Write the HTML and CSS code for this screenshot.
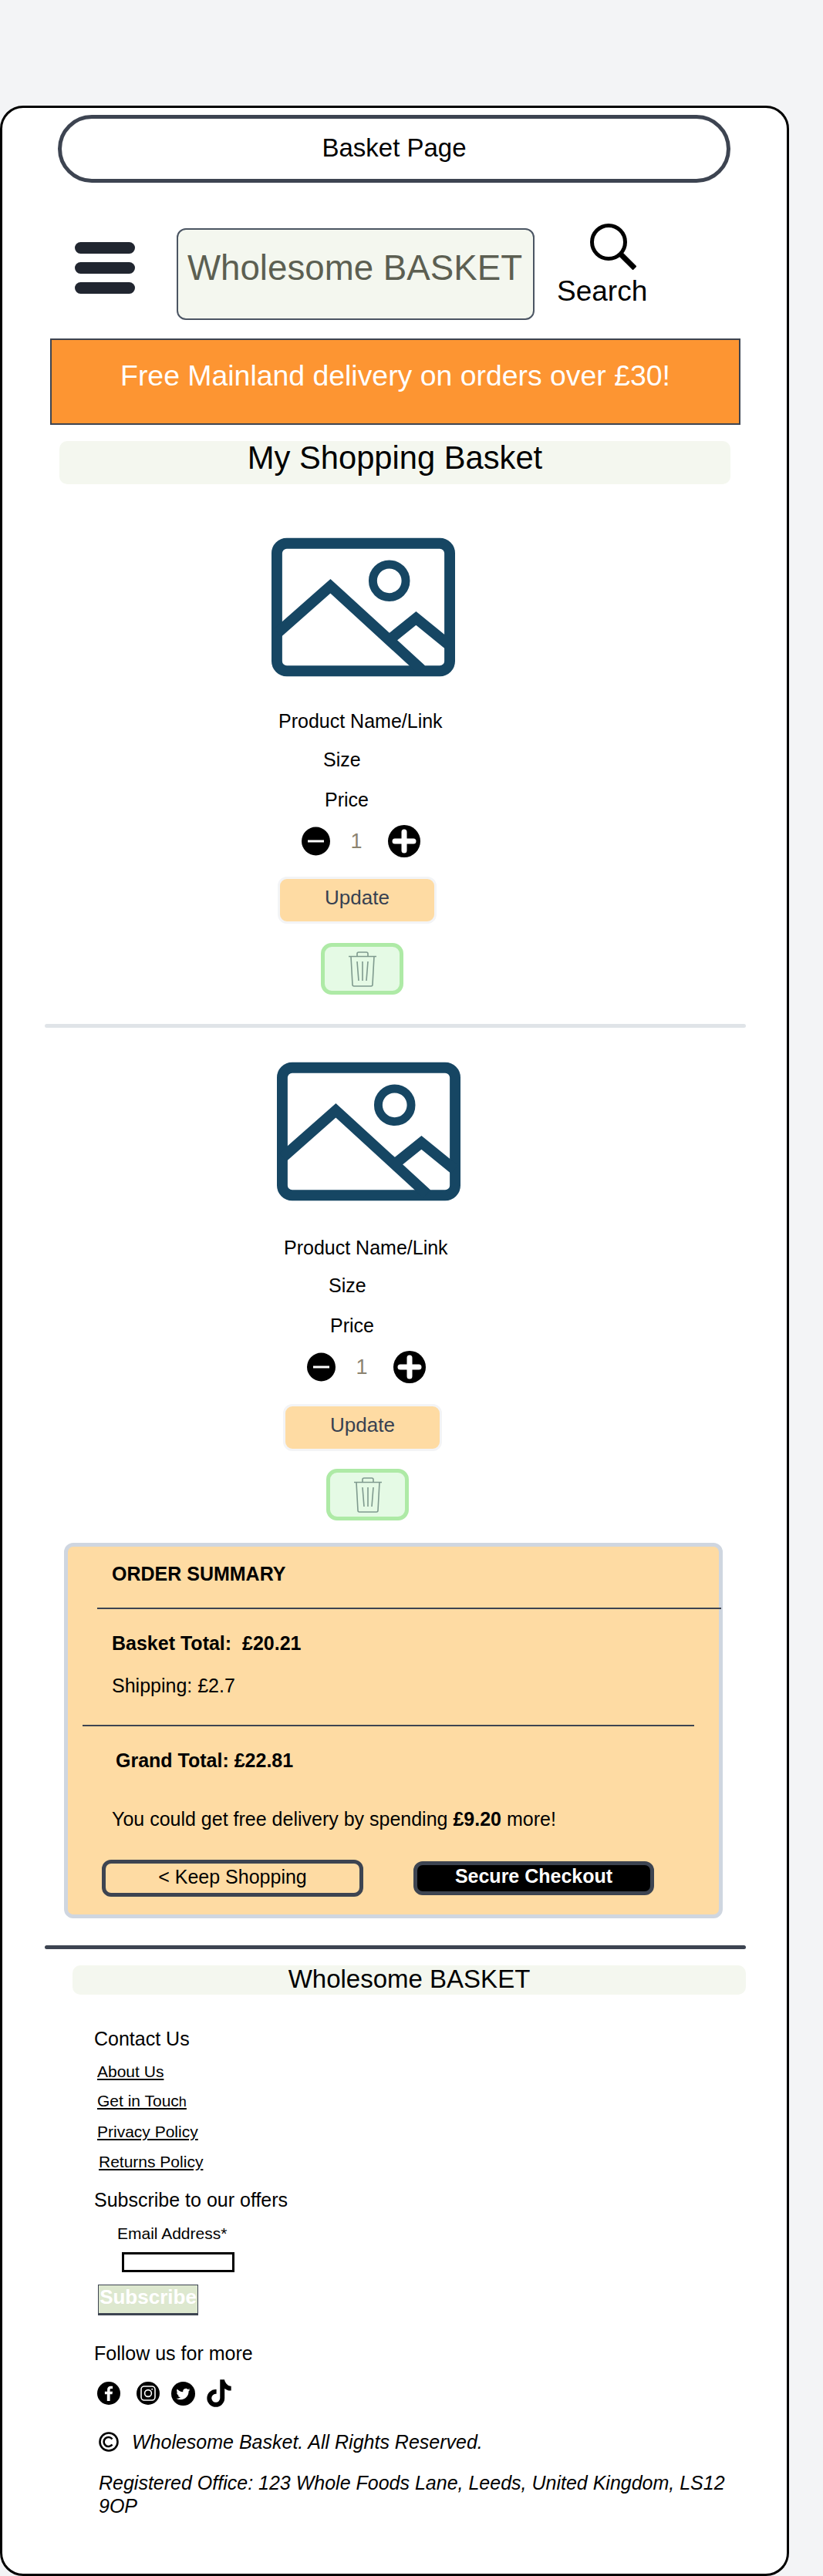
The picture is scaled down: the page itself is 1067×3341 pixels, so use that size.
FILE: index.html
```html
<!DOCTYPE html>
<html lang="en">
<head>
    <meta charset="UTF-8">
    <meta name="viewport" content="width=device-width, initial-scale=1.0">
    <title>Basket Page</title>
    <link rel="stylesheet" href="styles.css">
</head>
<body>
    <div class="page">
        <h1 class="page-title">Basket Page</h1>

        <header class="top-row">
            <div class="menu-icon"><span></span><span></span><span></span></div>
            <div class="logo-box">Wholesome BASKET</div>
            <div class="search">
                <svg class="search-icon" viewBox="0 0 62 60" width="62" height="60">
                    <circle cx="26" cy="24" r="21.5" fill="none" stroke="#000" stroke-width="5"/>
                    <line x1="41" y1="39" x2="60" y2="58" stroke="#000" stroke-width="7"/>
                </svg>
                <span class="search-label">Search</span>
            </div>
        </header>

        <div class="banner">Free Mainland delivery on orders over £30!</div>
        <h2 class="basket-heading">My Shopping Basket</h2>

        <section class="product">
            <svg class="product-img" viewBox="0 0 240 181" width="238" height="181">
                <rect x="7" y="7" width="226" height="167" rx="13" fill="none" stroke="#164663" stroke-width="14"/>
                <circle cx="154" cy="56" r="21.5" fill="none" stroke="#164663" stroke-width="11"/>
                <path d="M8 124 L77 63 L196 172 M158 130 L189 105 L232 140" fill="none" stroke="#164663" stroke-width="14"/>
            </svg>
            <p class="product-name">Product Name/Link</p>
            <p class="product-size">Size</p>
            <p class="product-price">Price</p>
            <div class="qty">
                <svg viewBox="0 0 37 38" width="37" height="38">
                    <circle cx="18.5" cy="19" r="18.5"/>
                    <line x1="8" y1="19" x2="29" y2="19" stroke="#fff" stroke-width="3"/>
                </svg>
                <span class="qty-num">1</span>
                <svg viewBox="0 0 42 42" width="42" height="42">
                    <circle cx="21" cy="21" r="21"/>
                    <path d="M9 21 H33 M21 9 V33" stroke="#fff" stroke-width="7" stroke-linecap="round"/>
                </svg>
            </div>
            <button class="update-btn">Update</button>
            <button class="trash-btn">
                <svg viewBox="0 0 36 46" width="36" height="46" fill="none" stroke="#7f9a8e" stroke-width="1.6">
                    <path d="M0 6.5 H36 M11 6.5 V3 Q11 1 13 1 H23 Q25 1 25 3 V6.5 M3 6.5 L5 43 Q5 45 7 45 H29 Q31 45 31 43 L33 6.5 M11 13 L13 38 M18 13 V38 M25 13 L23 38"/>
                </svg>
            </button>
        </section>

        <div class="divider"></div>

        <section class="product product-second">
            <svg class="product-img" viewBox="0 0 240 181" width="238" height="181">
                <rect x="7" y="7" width="226" height="167" rx="13" fill="none" stroke="#164663" stroke-width="14"/>
                <circle cx="154" cy="56" r="21.5" fill="none" stroke="#164663" stroke-width="11"/>
                <path d="M8 124 L77 63 L196 172 M158 130 L189 105 L232 140" fill="none" stroke="#164663" stroke-width="14"/>
            </svg>
            <p class="product-name">Product Name/Link</p>
            <p class="product-size">Size</p>
            <p class="product-price">Price</p>
            <div class="qty">
                <svg viewBox="0 0 37 38" width="37" height="38">
                    <circle cx="18.5" cy="19" r="18.5"/>
                    <line x1="8" y1="19" x2="29" y2="19" stroke="#fff" stroke-width="3"/>
                </svg>
                <span class="qty-num">1</span>
                <svg viewBox="0 0 42 42" width="42" height="42">
                    <circle cx="21" cy="21" r="21"/>
                    <path d="M9 21 H33 M21 9 V33" stroke="#fff" stroke-width="7" stroke-linecap="round"/>
                </svg>
            </div>
            <button class="update-btn">Update</button>
            <button class="trash-btn">
                <svg viewBox="0 0 36 46" width="36" height="46" fill="none" stroke="#7f9a8e" stroke-width="1.6">
                    <path d="M0 6.5 H36 M11 6.5 V3 Q11 1 13 1 H23 Q25 1 25 3 V6.5 M3 6.5 L5 43 Q5 45 7 45 H29 Q31 45 31 43 L33 6.5 M11 13 L13 38 M18 13 V38 M25 13 L23 38"/>
                </svg>
            </button>
        </section>

        <section class="summary">
            <h3 class="summary-title">ORDER SUMMARY</h3>
            <hr class="summary-line-top">
            <p class="basket-total">Basket Total:&nbsp; £20.21</p>
            <p class="shipping">Shipping: £2.7</p>
            <hr class="summary-line-bottom">
            <p class="grand-total">Grand Total: £22.81</p>
            <p class="free-note">You could get free delivery by spending <b>£9.20</b> more!</p>
            <div class="summary-buttons">
                <button class="keep-btn">&lt; Keep Shopping</button>
                <button class="checkout-btn">Secure Checkout</button>
            </div>
        </section>

        <div class="divider divider-dark"></div>

        <footer class="footer">
            <h2 class="footer-heading">Wholesome BASKET</h2>
            <h4 class="footer-title contact-title">Contact Us</h4>
            <a class="footer-link about-link" href="#">About Us</a>
            <a class="footer-link touch-link" href="#">Get in Touc<span class="small-h">h</span></a>
            <a class="footer-link" href="#">Privacy Policy</a>
            <a class="footer-link returns-link" href="#">Returns Policy</a>
            <h4 class="footer-title subscribe-title">Subscribe to our offers</h4>
            <label class="email-label" for="email">Email Address*</label>
            <input class="email-input" type="text" id="email">
            <button class="subscribe-btn">Subscribe</button>
            <h4 class="footer-title follow-title">Follow us for more</h4>
            <div class="socials">
                <svg viewBox="0 0 30 30" width="30" height="30">
                    <circle cx="15" cy="15" r="15"/>
                    <path fill="#fff" d="M16.6 25v-8.8h2.9l.5-3.5h-3.4v-2.1c0-1 .3-1.6 1.7-1.6h1.8V5.9c-.3 0-1.4-.1-2.6-.1-2.6 0-4.4 1.6-4.4 4.4v2.5H9.9v3.5h2.9V25z"/>
                </svg>
                <svg class="social-ig" viewBox="0 0 30 30" width="30" height="30">
                    <circle cx="15" cy="15" r="15"/>
                    <rect x="6" y="6" width="18" height="18" rx="4" fill="none" stroke="#fff" stroke-width="1.6"/>
                    <circle cx="15" cy="15" r="4.4" fill="none" stroke="#fff" stroke-width="1.6"/>
                    <circle cx="20.2" cy="9.8" r="1" fill="#fff"/>
                </svg>
                <svg class="social-tw" viewBox="0 0 31 31" width="31" height="31">
                    <circle cx="15.5" cy="15.5" r="15.5"/>
                    <g transform="translate(6.5 6.5) scale(1.12)">
                        <path fill="#fff" d="M5.026 15c6.038 0 9.341-5.003 9.341-9.334 0-.14 0-.282-.006-.422A6.685 6.685 0 0 0 16 3.542a6.658 6.658 0 0 1-1.889.518 3.301 3.301 0 0 0 1.447-1.817 6.533 6.533 0 0 1-2.087.793A3.286 3.286 0 0 0 7.875 6.03a9.325 9.325 0 0 1-6.767-3.429 3.289 3.289 0 0 0 1.018 4.382A3.323 3.323 0 0 1 .64 6.575v.045a3.288 3.288 0 0 0 2.632 3.218 3.203 3.203 0 0 1-.865.115 3.23 3.23 0 0 1-.614-.057 3.283 3.283 0 0 0 3.067 2.277A6.588 6.588 0 0 1 .78 13.58a6.32 6.32 0 0 1-.78-.045A9.344 9.344 0 0 0 5.026 15z"/>
                    </g>
                </svg>
                <svg class="social-tt" viewBox="0.5 -0.5 15 17" width="32" height="36">
                    <path stroke="#000" stroke-width="0.8" d="M9 0h1.98c.144.715.54 1.617 1.235 2.512C12.895 3.389 13.797 4 15 4v2c-1.753 0-3.07-.814-4-1.829V11a5 5 0 1 1-5-5v2a3 3 0 1 0 3 3V0Z"/>
                </svg>
            </div>
            <div class="copyright">
                <svg viewBox="0 0 26 26" width="26" height="26">
                    <circle cx="13" cy="13" r="11.5" fill="none" stroke="#000" stroke-width="2.6"/>
                    <path d="M17.5 9.5 A6 6 0 1 0 17.5 16.5" fill="none" stroke="#000" stroke-width="2.6"/>
                </svg>
                <em>Wholesome Basket. All Rights Reserved.</em>
            </div>
            <p class="office"><em>Registered Office: 123 Whole Foods Lane, Leeds, United Kingdom, LS12 9OP</em></p>
        </footer>
    </div>
</body>
</html>
```

FILE: styles.css
```css
* {
    box-sizing: border-box;
}

body {
    font-family: "Liberation Sans", Arial, sans-serif;
    background-color: #f3f4f6;
    color: #000;
    margin: 0;
    padding-top: 137px;
}

h1, h2, h3, h4, p, hr {
    margin: 0;
    font-weight: normal;
}

button {
    font-family: inherit;
    padding: 0;
    display: block;
}

.page {
    width: 1023px;
    background-color: #fff;
    border: 3px solid #000;
    border-radius: 30px;
    padding-top: 9px;
    padding-bottom: 73px;
}

.page-title {
    width: 872px;
    height: 88px;
    margin-left: 72px;
    border: 5px solid #3d4451;
    border-radius: 44px;
    font-size: 33px;
    line-height: 76px;
    text-align: center;
}

.top-row {
    display: flex;
    align-items: flex-start;
    height: 125px;
    margin-top: 53px;
}

.menu-icon {
    width: 78px;
    margin: 24px 0 0 94px;
}

.menu-icon span {
    display: block;
    height: 15px;
    margin-bottom: 11px;
    background-color: #212630;
    border-radius: 8px;
}

.logo-box {
    width: 464px;
    height: 119px;
    margin: 6px 0 0 54px;
    background-color: #f4f7ef;
    border: 2px solid #4b5563;
    border-radius: 12px;
    color: #5c5f52;
    font-size: 45.7px;
    line-height: 100px;
    padding-right: 2px;
    text-align: center;
    white-space: nowrap;
}

.search {
    margin-left: 29px;
}

.search-icon {
    display: block;
    margin-left: 41px;
}

.search-label {
    display: block;
    font-size: 37px;
    line-height: 42px;
    margin-top: 7px;
}

.banner {
    width: 895px;
    height: 112px;
    margin: 24px 0 0 62px;
    background-color: #fd9532;
    border: 2px solid #3d4451;
    color: #fff;
    font-size: 37.4px;
    line-height: 92px;
    text-align: center;
}

.basket-heading {
    width: 870px;
    height: 56px;
    margin: 21px 0 0 74px;
    background-color: #f4f7ef;
    border-radius: 10px;
    font-size: 41.7px;
    line-height: 44px;
    text-align: center;
}

.product {
    margin-top: 69px;
}

.product-second {
    margin-top: 44px;
    margin-left: 7px;
}

.product-img {
    display: block;
    margin-left: 349px;
}

.product-name, .product-size, .product-price {
    font-size: 25px;
    line-height: 28px;
}

.product-name {
    margin: 43px 0 0 358px;
}

.product-second .product-name {
    margin-top: 46px;
}

.product-size {
    margin: 22px 0 0 416px;
}

.product-second .product-size {
    margin-top: 21px;
}

.product-price {
    margin: 24px 0 0 418px;
}

.qty {
    display: flex;
    align-items: center;
    height: 42px;
    margin: 19px 0 0 388px;
}

.qty-num {
    width: 75px;
    color: #8b8370;
    font-size: 27px;
    text-align: center;
    padding-right: 7px;
}

.update-btn {
    width: 206px;
    height: 61px;
    margin: 25px 0 0 357px;
    background-color: #fedba3;
    border: 3px solid #f3f4f6;
    border-radius: 12px;
    color: #374151;
    font-size: 26px;
    padding-bottom: 6px;
}

.product-second .update-btn {
    margin-top: 27px;
}

.trash-btn {
    display: flex;
    justify-content: center;
    align-items: center;
    width: 107px;
    height: 67px;
    margin: 25px 0 0 413px;
    background-color: #e5fae5;
    border: 5px solid #aeeaa6;
    border-radius: 14px;
}

.product-second .trash-btn {
    margin-top: 23px;
}

.divider {
    width: 909px;
    height: 5px;
    margin: 38px 0 0 55px;
    background-color: #e0e4e8;
    border-radius: 3px;
}

.divider-dark {
    margin-top: 35px;
    background-color: #3d4451;
}

.summary {
    width: 854px;
    height: 487px;
    margin: 29px 0 0 80px;
    background-color: #fedba3;
    border: 5px solid #cfd6e0;
    border-radius: 12px;
    font-size: 25px;
    line-height: 28px;
}

.summary-title {
    font-size: 25px;
    font-weight: bold;
    padding: 21px 0 0 57px;
}

.summary-line-top {
    width: 809px;
    height: 2px;
    border: none;
    background-color: #3d4451;
    margin: 30px 0 0 38px;
}

.basket-total {
    font-weight: bold;
    margin: 30px 0 0 57px;
}

.shipping {
    margin: 27px 0 0 57px;
}

.summary-line-bottom {
    width: 793px;
    height: 2px;
    border: none;
    background-color: #3d4451;
    margin: 37px 0 0 19px;
}

.grand-total {
    font-weight: bold;
    margin: 30px 0 0 62px;
}

.free-note {
    margin: 48px 0 0 57px;
}

.summary-buttons {
    display: flex;
    align-items: center;
    gap: 65px;
    margin: 39px 0 0 44px;
}

.keep-btn {
    width: 339px;
    height: 48px;
    background-color: #fedba3;
    border: 5px solid #3d4451;
    border-radius: 12px;
    color: #000;
    font-size: 25px;
    padding-bottom: 4px;
}

.checkout-btn {
    width: 312px;
    height: 44px;
    background-color: #000;
    border: 5px solid #3d4451;
    border-radius: 12px;
    color: #fff;
    font-size: 25px;
    font-weight: bold;
    padding-bottom: 6px;
}

.footer-heading {
    width: 873px;
    height: 38px;
    margin: 21px 0 0 91px;
    background-color: #f4f7ef;
    border-radius: 10px;
    font-size: 33px;
    line-height: 36px;
    text-align: center;
}

.footer-title {
    font-size: 25px;
    line-height: 30px;
    margin-left: 119px;
}

.contact-title {
    margin-top: 42px;
}

.footer-link {
    display: block;
    width: max-content;
    color: #000;
    font-size: 21px;
    line-height: 24px;
    margin: 15px 0 0 123px;
}

.about-link {
    margin-top: 16px;
}

.touch-link {
    margin-top: 14px;
}

.returns-link {
    margin-left: 125px;
}

.small-h {
    font-size: 18px;
}

.subscribe-title {
    margin-top: 22px;
}

.email-label {
    display: block;
    font-size: 21px;
    line-height: 24px;
    margin: 17px 0 0 149px;
}

.email-input {
    display: block;
    width: 146px;
    height: 26px;
    margin: 12px 0 0 155px;
    border: 3px solid #000;
    background-color: #fff;
}

.subscribe-btn {
    width: 130px;
    height: 40px;
    margin: 16px 0 0 124px;
    background-color: #dde8cf;
    border: 1px solid #3d4451;
    border-bottom-width: 3px;
    color: #fff;
    font-size: 26px;
    font-weight: bold;
    padding-bottom: 6px;
}

.follow-title {
    margin-top: 34px;
}

.socials {
    display: flex;
    align-items: center;
    height: 36px;
    margin: 19px 0 0 123px;
}

.social-ig {
    margin-left: 21px;
}

.social-tw {
    margin-left: 15px;
}

.social-tt {
    margin-left: 15px;
}

.copyright {
    display: flex;
    align-items: center;
    gap: 17px;
    font-size: 25px;
    line-height: 30px;
    margin: 30px 0 0 125px;
}

.office {
    width: 830px;
    font-size: 25px;
    line-height: 30px;
    margin: 23px 0 0 125px;
}
```
